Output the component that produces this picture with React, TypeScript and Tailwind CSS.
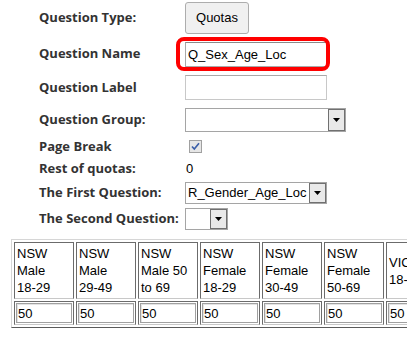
import React from "react";

const labelCls =
  "w-[146px] shrink-0 whitespace-nowrap font-['Open_Sans',sans-serif] text-[13px] font-bold text-[#333]";

function Row({ h, label, children }: { h: string; label: string; children?: React.ReactNode }) {
  return (
    <div className={`flex items-center pl-[39px] ${h}`}>
      <div className={labelCls}>{label}</div>
      <div className="flex items-center">{children}</div>
    </div>
  );
}

function Select({ w, h, value }: { w: string; h: string; value?: string }) {
  return (
    <div className={`flex ${w} ${h} items-stretch border border-[#a5a5a5] bg-white`}>
      <div className="flex flex-1 items-center overflow-hidden whitespace-nowrap pl-[2px] text-[13px] text-black">
        {value}
      </div>
      <div className="flex w-[17px] items-center justify-center border border-[#707070] bg-[#e9e9e9]">
        <svg width="7" height="4" viewBox="0 0 7 4">
          <path d="M0 0h7L3.5 4z" fill="#000" />
        </svg>
      </div>
    </div>
  );
}

const headers = [
  ["NSW", "Male", "18-29"],
  ["NSW", "Male", "29-49"],
  ["NSW", "Male 50", "to 69"],
  ["NSW", "Female", "18-29"],
  ["NSW", "Female", "30-49"],
  ["NSW", "Female", "50-69"],
  ["VIC", "18-29"],
];

const cellBorder =
  "border border-t-[#6b6b6b] border-l-[#6b6b6b] border-r-[#6b6b6b] border-b-[#c8c8c8]";

export default function App() {
  return (
    <div className="h-[342px] w-[416px] overflow-hidden bg-white font-['Liberation_Sans',Arial,sans-serif]">
      <Row h="h-[36px]" label="Question Type:">
        <button className="h-[32px] w-[64px] rounded-[3px] border border-[#adadad] bg-[#f0f0f0] text-[13px] text-black">
          Quotas
        </button>
      </Row>
      <Row h="h-[35px]" label="Question Name">
        <div className="relative mt-[2px]">
          <input
            readOnly
            value="Q_Sex_Age_Loc"
            className="h-[25px] w-[142px] border border-[#a9a9a9] border-t-[#8a8a8a] bg-white px-[2px] text-[13px] text-black outline-none"
          />
          <div className="pointer-events-none absolute left-[-9px] top-[-5px] h-[34px] w-[154px] rounded-[8px] border-4 border-[#ff0000]" />
        </div>
      </Row>
      <Row h="h-[33px]" label="Question Label">
        <input
          readOnly
          className="h-[25px] w-[142px] border border-[#c8c8c8] border-t-[#a9a9a9] bg-white outline-none"
        />
      </Row>
      <Row h="h-[31px]" label="Question Group:">
        <Select w="w-[161px]" h="h-[24px]" />
      </Row>
      <Row h="h-[23px]" label="Page Break">
        <div className="ml-[4px] flex h-[13px] w-[13px] items-center justify-center border border-[#a0a0a0] bg-[#e6e6e6]">
          <svg width="9" height="9" viewBox="0 0 9 9">
            <path d="M1 4.5l2.3 2.6L8 1.2" stroke="#3a5ea8" strokeWidth="1.6" fill="none" />
          </svg>
        </div>
      </Row>
      <Row h="h-[22px]" label="Rest of quotas:">
        <span className="pl-[1px] text-[13px] text-black">0</span>
      </Row>
      <Row h="h-[26px]" label="The First Question:">
        <Select w="w-[142px]" h="h-[22px]" value="R_Gender_Age_Loc" />
      </Row>
      <Row h="h-[26px]" label="The Second Question:">
        <Select w="w-[43px]" h="h-[22px]" />
      </Row>

      <div className="ml-[11px] mt-[7px] w-[396px] overflow-hidden">
        <table className="border-separate border-spacing-[2px] border border-t-[#d6d6d6] border-l-[#d6d6d6] border-r-[#5a5a5a] border-b-[#5a5a5a] text-[13px] leading-[17px] text-black">
          <tbody>
            <tr>
              {headers.map((lines, i) => (
                <td key={i} className={`${cellBorder} w-[60px] min-w-[60px] px-[2px] py-[2px] align-middle`}>
                  {lines.map((l, j) => (
                    <div key={j} className="whitespace-nowrap">
                      {l}
                    </div>
                  ))}
                </td>
              ))}
            </tr>
            <tr>
              {headers.map((_, i) => (
                <td key={i} className={`${cellBorder} p-[1px]`}>
                  <input
                    readOnly
                    value="50"
                    className="block h-[20px] w-[56px] border border-[#a0a0a0] bg-white px-[1px] text-[13px] text-black shadow-[inset_1px_1px_0_#e3e3e3] outline-none"
                  />
                </td>
              ))}
            </tr>
          </tbody>
        </table>
      </div>
    </div>
  );
}
